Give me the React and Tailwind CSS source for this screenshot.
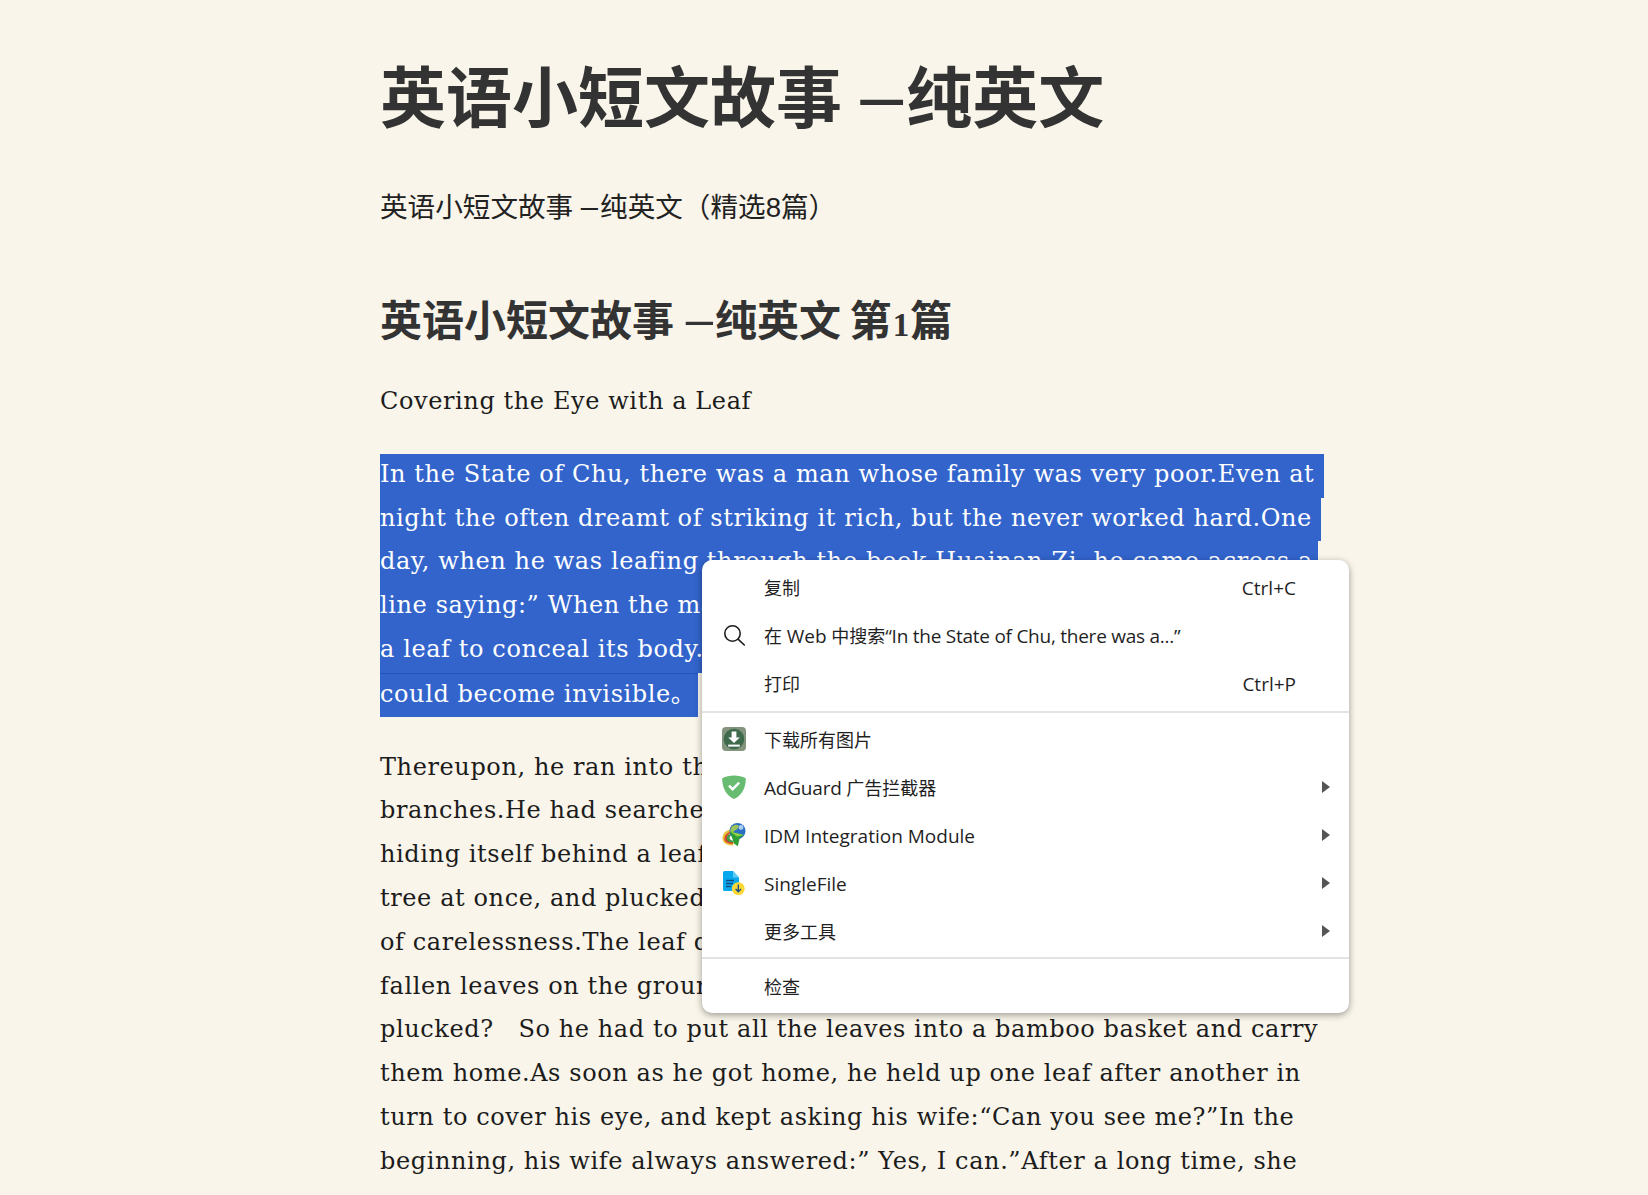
import React from "react";

const CJK = "font-['Liberation_Sans','Noto_Sans_CJK_SC',sans-serif]";
const BODY = "font-['DejaVu_Serif','Noto_Sans_CJK_SC',serif]";
const MENU = "font-['Open_Sans','Noto_Sans_CJK_SC',sans-serif]";

// selected paragraph: each row carries its own highlight width
const SELECTED = [
  { text: "In the State of Chu, there was a man whose family was very poor.Even at", w: "w-[944px]" },
  { text: "night the often dreamt of striking it rich, but the never worked hard.One", w: "w-[941px]" },
  { text: "day, when he was leafing through the book Huainan Zi, he came across a", w: "w-[938px]" },
  { text: "line saying:” When the mantis catches a cicada, it always hides behind", w: "w-[938px]" },
  { text: "a leaf to conceal its body.If someone gets hold of that leaf, then he", w: "w-[938px]" },
  { text: "could become invisible。", w: "w-[318px]", edge: true },
];

const BODY_LINES = [
  "Thereupon, he ran into the woods and looked for a mantis among the",
  "branches.He had searched for a long time when he saw a mantis",
  "hiding itself behind a leaf to catch a cicada. He climbed up the",
  "tree at once, and plucked the leaf, but it fell from his hand because",
  "of carelessness.The leaf dropped to the ground and mixed with the",
  "fallen leaves on the ground. How could he tell which one he had",
  "plucked?\u00a0\u00a0 So he had to put all the leaves into a bamboo basket and carry",
  "them home.As soon as he got home, he held up one leaf after another in",
  "turn to cover his eye, and kept asking his wife:“Can you see me?”In the",
  "beginning, his wife always answered:” Yes, I can.”After a long time, she",
  "became tired of it and said casually: “No, I can’t see you any more.”",
];

function Dash({ className }) {
  return <span className={`font-normal leading-[0] ${className}`}>–</span>;
}

// latin runs in the menu sit a touch larger than the CJK ones
function Lat({ children, className = "" }) {
  return <span className={`text-[19px] ${className}`}>{children}</span>;
}

function SearchIcon() {
  return (
    <svg width="24" height="24" viewBox="0 0 24 24" fill="none" stroke="#1f1f1f" strokeWidth="1.6" strokeLinecap="round">
      <circle cx="10.5" cy="10.5" r="7.7" />
      <path d="M16.3 16.3 L22.3 22" />
    </svg>
  );
}

function DownloadIcon() {
  return (
    <svg width="24" height="24" viewBox="0 0 24 24">
      <rect width="24" height="24" rx="4" fill="#84947c" />
      <circle cx="12" cy="12" r="10.3" fill="#3f6a4c" />
      <path d="M9.6 4.6h4.8v6h3.4L12 16 6.2 10.6h3.4z" fill="#fff" />
      <rect x="6.2" y="17.6" width="11.6" height="2" fill="#fff" />
    </svg>
  );
}

function ShieldIcon() {
  return (
    <svg width="24" height="24" viewBox="0 0 24 24">
      <path d="M12 0.5C8 0.5 3.6 1.4 0.2 3.2 0.2 13 3.8 20 12 24 20.2 20 23.8 13 23.8 3.2 20.4 1.4 16 0.5 12 0.5z" fill="#68bc71" />
      <path d="M7 10.6l3.6 3.6 6.6-6.6" fill="none" stroke="#fff" strokeWidth="2.4" />
    </svg>
  );
}

function IdmIcon() {
  return (
    <svg width="24" height="24" viewBox="0 0 24 24">
      <path d="M0.5 15.5C0.5 10.5 4 7 9 6.5L11 9.5C7 9.5 4.5 11.5 5 14.5 5.5 17 9 19 12 19L11 22.5C5 22.5 0.5 20 0.5 15.5z" fill="#e8c23a" />
      <path d="M2.4 16C2.4 12 6 9 10 8.5L11 9.8C7.5 10.2 5 12 5.4 15 5.8 17 8.5 18.6 11.5 18.6L10.8 20.8C6 20.8 2.4 19 2.4 16z" fill="#d8432f" />
      <path d="M4.6 15.5c0-2.6 2.4-4.6 5.8-5.2l.8 1.4c-2.4.4-3.8 1.8-3.6 3.6.2 1.4 2 2.4 4 2.4L11 19.4c-3.6 0-6.4-1.4-6.4-3.9z" fill="#3f9c46" />
      <circle cx="15.5" cy="8" r="8" fill="#2a6fc4" />
      <path d="M10 3.5c2-1.8 5-2.2 6.5-1 .8 1.4-.6 3.4-2.6 4.4-2 .8-3.4 3-4.6 3.6-1.6-1.6-.8-5.4.7-7z" fill="#9cc45a" />
      <circle cx="19" cy="4.5" r="2.4" fill="#a9cdee" />
      <path d="M8 8.5L22 12l-4.2 2.8 -2 8.4L12 20.5z" fill="#2f9e35" />
      <path d="M8 8.5L22 12l-7 1.5z" fill="#8ed04b" />
    </svg>
  );
}

function SingleFileIcon() {
  return (
    <svg width="24" height="24" viewBox="0 0 24 24">
      <path d="M1 1.5A1.5 1.5 0 0 1 2.5 0H11l6 6.5V20H2.5A1.5 1.5 0 0 1 1 18.5z" fill="#07a9ec" />
      <path d="M11 0l6 6.5h-6z" fill="#5fcbf5" />
      <path d="M4 9.5h8M4 12.5h7M4 15.5h5" stroke="#0d4f86" strokeWidth="1.5" />
      <circle cx="16.3" cy="17.6" r="6.4" fill="#fdd835" />
      <path d="M16.3 13.6v7M13.6 18l2.7 2.8L19 18" fill="none" stroke="#1c4f86" strokeWidth="1.4" />
    </svg>
  );
}

const TOP_ITEMS = [
  { id: "copy", label: "复制", shortcut: "Ctrl+C" },
  { id: "search", label: <>在 <Lat>Web</Lat> 中搜索<Lat className="tracking-[-0.25px]">“In the State of Chu, there was a...”</Lat></>, icon: <SearchIcon /> },
  { id: "print", label: "打印", shortcut: "Ctrl+P" },
];

const TOOL_ITEMS = [
  { id: "images", label: "下载所有图片", icon: <DownloadIcon /> },
  { id: "adguard", label: <><Lat className="tracking-[-0.2px]">AdGuard</Lat> 广告拦截器</>, icon: <ShieldIcon />, sub: true },
  { id: "idm", label: <Lat>IDM Integration Module</Lat>, icon: <IdmIcon />, sub: true },
  { id: "singlefile", label: <Lat>SingleFile</Lat>, icon: <SingleFileIcon />, sub: true },
  { id: "more", label: "更多工具", sub: true },
];

function MenuRow({ item }) {
  return (
    <div className="flex h-[48px] items-center pl-[20px] pr-[19px]">
      <span className="flex w-[24px] shrink-0 -translate-y-[1px] justify-center">{item.icon}</span>
      <span className="ml-[18px] flex-1 whitespace-nowrap">{item.label}</span>
      {item.shortcut && <span className="mr-[34px] text-[19px]">{item.shortcut}</span>}
      {item.sub && <span className="h-0 w-0 -translate-y-[1px] border-y-[6px] border-l-[8.5px] border-y-transparent border-l-[#555555]" />}
    </div>
  );
}

function ContextMenu() {
  return (
    <div className={`absolute left-[702px] top-[560px] w-[647px] rounded-[10px] bg-white pt-[4px] pb-[2px] text-[18px] leading-[24px] text-[#1f1f1f] shadow-[0_2px_7px_rgba(0,0,0,0.38)] ${MENU}`}>
      {TOP_ITEMS.map((it) => <MenuRow key={it.id} item={it} />)}
      <div className="mt-[3px] mb-[3px] h-[2px] bg-[#e3e3e3]" />
      {TOOL_ITEMS.map((it) => <MenuRow key={it.id} item={it} />)}
      <div className="mt-[1px] mb-[4px] h-[2px] bg-[#e3e3e3]" />
      <MenuRow item={{ label: "检查" }} />
    </div>
  );
}

export default function App() {
  return (
    <div className="relative h-[1195px] overflow-hidden bg-[#f9f5ea]">
      <div className="ml-[380px] w-[950px] pt-[59px]">
        <h1 className={`h-[80px] whitespace-nowrap text-[66px] font-bold leading-[80px] text-[#333333] ${CJK}`}>
          英语小短文故事 <Dash className="mr-[3px] text-[77px]" />纯英文
        </h1>
        <p className={`mt-[47px] h-[44px] whitespace-nowrap text-[27.6px] leading-[44px] text-[#222222] ${CJK}`}>
          英语小短文故事 <Dash className="mr-[2px] text-[31px]" />纯英文（精选8篇）
        </p>
        <h2 className={`mt-[64px] h-[56px] whitespace-nowrap text-[42px] font-bold leading-[56px] text-[#333333] ${CJK}`}>
          英语小短文故事 <Dash className="mr-[2px] text-[49px]" />纯英文 <span className="-ml-[3px]">第</span><span className="mx-[1px] font-['Liberation_Serif',serif] text-[33px] leading-[0]">1</span>篇
        </h2>
        <div className={`whitespace-nowrap text-[24px] leading-[43.8px] tracking-[0.6px] text-[#1c1c1c] ${BODY}`}>
          <p className="mt-[30px]">Covering the Eye with a Leaf</p>
          <div className="mt-[30px]">
            {SELECTED.map((row) => (
              <div key={row.text} className={`h-[43.8px] bg-[#3264cc] text-white ${row.w} ${row.edge ? "border-t border-[#1f55c0] leading-[40.8px]" : "leading-[41.8px]"}`}>
                {row.text}
              </div>
            ))}
          </div>
          <div className="mt-[29px]">
            {BODY_LINES.map((line) => <div key={line}>{line}</div>)}
          </div>
        </div>
      </div>
      <ContextMenu />
    </div>
  );
}
